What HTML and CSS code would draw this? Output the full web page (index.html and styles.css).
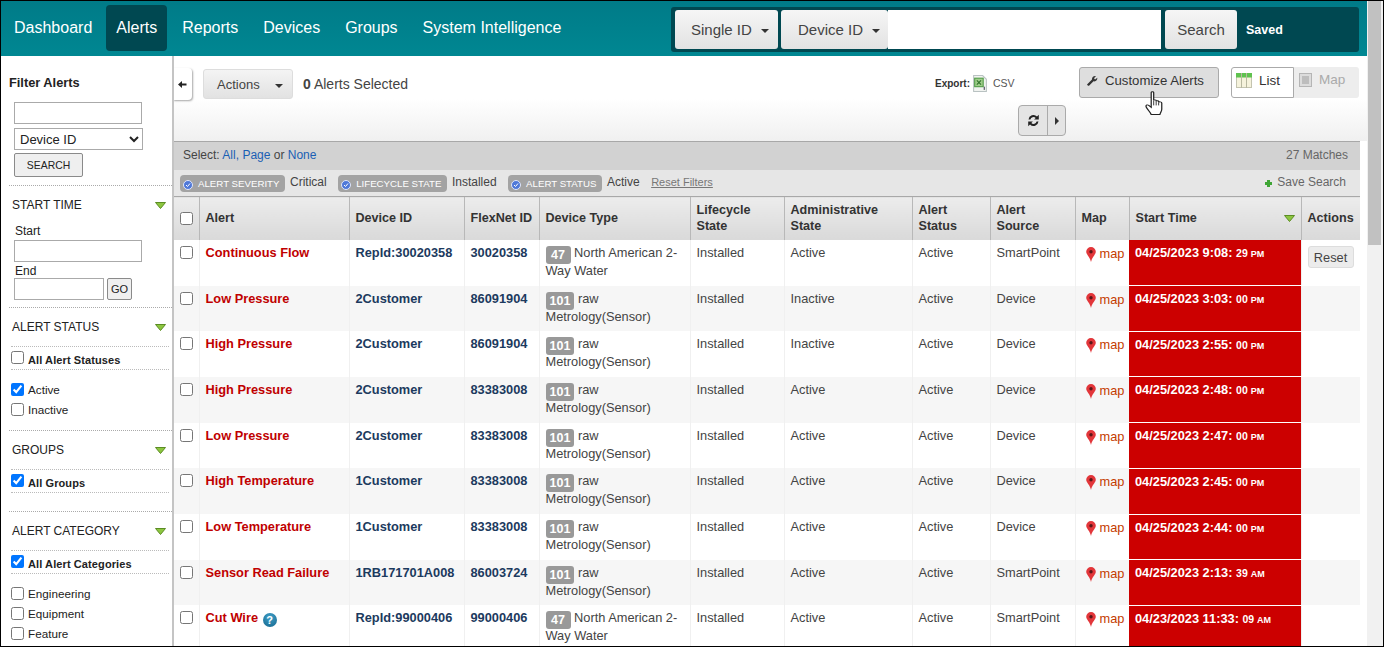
FILE: index.html
```html
<!DOCTYPE html>
<html lang="en">
<head>
<meta charset="UTF-8"/>
<title>Alerts</title>
<link rel="stylesheet" href="styles.css">
</head>
<body>
<div class="frame">
<div class="page">

<!-- top navigation -->
<div class="topbar">
  <div class="nav">
    <a class="nav-item">Dashboard</a>
    <a class="nav-item active">Alerts</a>
    <a class="nav-item">Reports</a>
    <a class="nav-item">Devices</a>
    <a class="nav-item">Groups</a>
    <a class="nav-item">System Intelligence</a>
  </div>
  <div class="searchbox">
    <div class="search-btn w-single">Single ID <span class="caret"></span></div>
    <div class="search-btn w-device">Device ID <span class="caret"></span></div>
    <div class="search-input"></div>
    <div class="search-btn w-go">Search</div>
    <div class="saved">Saved</div>
  </div>
</div>

<div class="content">

<!-- left filters -->
<div class="sidebar">
  <div class="side-title">Filter Alerts</div>
  <div class="side-search">
    <input class="txt" type="text">
    <select class="sel"><option>Device ID</option></select>
    <button class="side-btn">SEARCH</button>
  </div>

  <div class="side-head"><span>START TIME</span><svg class="tri" viewBox="0 0 11 7"><polygon points="0.5,0.5 10.5,0.5 5.5,6.5" fill="#8cc63f" stroke="#5b8c23"/></svg></div>
  <div class="dates">
    <div class="lbl">Start</div>
    <input class="txt" type="text">
    <div class="lbl">End</div>
    <div class="end-row"><input class="txt short" type="text"><button class="go">GO</button></div>
  </div>

  <div class="side-head"><span>ALERT STATUS</span><svg class="tri" viewBox="0 0 11 7"><polygon points="0.5,0.5 10.5,0.5 5.5,6.5" fill="#8cc63f" stroke="#5b8c23"/></svg></div>
  <label class="all-row"><input type="checkbox"><b>All Alert Statuses</b></label>
  <div class="opts">
    <label><input type="checkbox" checked>Active</label>
    <label><input type="checkbox">Inactive</label>
  </div>

  <div class="side-head"><span>GROUPS</span><svg class="tri" viewBox="0 0 11 7"><polygon points="0.5,0.5 10.5,0.5 5.5,6.5" fill="#8cc63f" stroke="#5b8c23"/></svg></div>
  <label class="all-row"><input type="checkbox" checked><b>All Groups</b></label>
  <div class="spacer"></div>

  <div class="side-head"><span>ALERT CATEGORY</span><svg class="tri" viewBox="0 0 11 7"><polygon points="0.5,0.5 10.5,0.5 5.5,6.5" fill="#8cc63f" stroke="#5b8c23"/></svg></div>
  <label class="all-row"><input type="checkbox" checked><b>All Alert Categories</b></label>
  <div class="opts">
    <label><input type="checkbox">Engineering</label>
    <label><input type="checkbox">Equipment</label>
    <label><input type="checkbox">Feature</label>
  </div>
</div>

<div class="main">
  <!-- toolbar -->
  <div class="toolbar">
    <div class="collapse"><svg width="9" height="7" viewBox="0 0 9 7"><path d="M0 3.500L4 0V2.500H8.500V4.500H4V7Z" fill="#222"/></svg></div>
    <div class="actions-btn">Actions <span class="caret"></span></div>
    <div class="selected"><b>0</b> Alerts Selected</div>
    <div class="tool-right">
      <div class="tool-row">
        <div class="export"><b>Export:</b>
          <svg width="16" height="17" viewBox="0 0 15 16"><path d="M1.500 .5H10L13.500 4V15.500H1.500Z" fill="#f1f3f0" stroke="#b9c2c2"/><rect x="2.500" y="3" width="8" height="8" fill="#9fce8a" stroke="#4f9a45"/><path d="M4.500 5l4 4M8.500 5l-4 4" stroke="#2f6f2a"/><rect x="11" y="11" width="1" height="3" fill="#445"/></svg>
          <span class="csv">CSV</span>
        </div>
        <div class="customize"><svg width="11" height="11" viewBox="0 0 11 11"><path d="M0 9.500L5 4.500C4.700 2.500 6.500 .5 9 1L7 3.200L8 4.500L10.300 2.800C10.700 5 8.700 7 6.500 6.300L2 10.700H1Z" fill="#333"/></svg>Customize Alerts</div>
        <div class="view-switch">
          <div class="view on"><svg width="16" height="15" viewBox="0 0 16 15"><rect x=".5" y=".5" width="15" height="14" fill="#f5f2dc" stroke="#c4c4b0"/><rect x="0" y="0" width="16" height="4.500" fill="#5fc24f"/><path d="M5.500 0V15M10.500 0V15" stroke="#b8b8a0"/></svg>List</div>
          <div class="view off"><svg width="13" height="14" viewBox="0 0 13 14"><rect x=".5" y=".5" width="12" height="13" fill="#dcdcdc" stroke="#b5b5b5"/><path d="M3 3h7v8H3z" fill="#bdbdbd"/></svg>Map</div>
        </div>
      </div>
      <div class="refresh">
        <div class="ref-l"><svg width="13" height="13" viewBox="0 0 13 13"><path d="M1.500 5.500A5 5 0 0 1 10 2.500L11.800 .8V5.500H7.100L8.700 3.900A3.200 3.200 0 0 0 3.400 5.500Z" fill="#222"/><path d="M11.500 7.500A5 5 0 0 1 3 10.500L1.200 12.200V7.500H5.900L4.300 9.100A3.200 3.200 0 0 0 9.600 7.500Z" fill="#222"/></svg></div>
        <div class="ref-r"><span class="tri-right"></span></div>
      </div>
    </div>
  </div>

  <!-- select bar -->
  <div class="selectbar">
    <div>Select: <a>All,</a> <a>Page</a> or <a>None</a></div>
    <div class="matches">27 Matches</div>
  </div>

  <!-- filter chips -->
  <div class="filterbar">
    <span class="chip"><svg class="tick" viewBox="0 0 10 10"><circle cx="5" cy="5" r="4.500" fill="#4f78d8" stroke="#dfe6fa"/><path d="M3 5l1.500 1.500L7 3.500" fill="none" stroke="#fff"/></svg>ALERT SEVERITY</span><span class="chip-val">Critical</span>
    <span class="chip"><svg class="tick" viewBox="0 0 10 10"><circle cx="5" cy="5" r="4.500" fill="#4f78d8" stroke="#dfe6fa"/><path d="M3 5l1.500 1.500L7 3.500" fill="none" stroke="#fff"/></svg>LIFECYCLE STATE</span><span class="chip-val">Installed</span>
    <span class="chip"><svg class="tick" viewBox="0 0 10 10"><circle cx="5" cy="5" r="4.500" fill="#4f78d8" stroke="#dfe6fa"/><path d="M3 5l1.500 1.500L7 3.500" fill="none" stroke="#fff"/></svg>ALERT STATUS</span><span class="chip-val">Active</span>
    <span class="reset">Reset Filters</span>
    <span class="save"><span class="plus"></span>Save Search</span>
  </div>

  <table class="alerts">
    <colgroup>
      <col class="c-chk"><col class="c-alert"><col class="c-dev"><col class="c-flex"><col class="c-type"><col class="c-life"><col class="c-admin"><col class="c-stat"><col class="c-src"><col class="c-map"><col class="c-time"><col class="c-act">
    </colgroup>
    <thead>
      <tr>
        <th><input type="checkbox"></th>
        <th>Alert</th>
        <th>Device ID</th>
        <th>FlexNet ID</th>
        <th>Device Type</th>
        <th>Lifecycle<br>State</th>
        <th>Administrative<br>State</th>
        <th>Alert<br>Status</th>
        <th>Alert<br>Source</th>
        <th>Map</th>
        <th><div class="th-sort">Start Time<svg class="tri" viewBox="0 0 11 7"><polygon points="0.5,0.5 10.5,0.5 5.500,6.500" fill="#8cc63f" stroke="#5b8c23"/></svg></div></th>
        <th>Actions</th>
      </tr>
    </thead>
    <tbody>
      <tr>
        <td><input type="checkbox"></td><td class="name">Continuous Flow</td><td class="dev">RepId:30020358</td><td class="dev">30020358</td>
        <td><span class="num">47</span> North American 2-Way Water</td><td>Installed</td><td>Active</td><td>Active</td><td>SmartPoint</td>
        <td class="map"><svg class="pin" viewBox="0 0 10 15"><path d="M5 0A4.800 4.800 0 0 0 .2 4.800C.2 7.800 3.800 9.500 5 15C6.200 9.500 9.800 7.800 9.800 4.800A4.800 4.800 0 0 0 5 0Z" fill="#e2363a"/><circle cx="5" cy="4.800" r="1.700" fill="#5a1517"/></svg>map</td>
        <td class="time">04/25/2023 9:08: <small>29 <i>PM</i></small></td><td><span class="reset-btn">Reset</span></td>
      </tr>
      <tr>
        <td><input type="checkbox"></td><td class="name">Low Pressure</td><td class="dev">2Customer</td><td class="dev">86091904</td>
        <td><span class="num">101</span> raw Metrology(Sensor)</td><td>Installed</td><td>Inactive</td><td>Active</td><td>Device</td>
        <td class="map"><svg class="pin" viewBox="0 0 10 15"><path d="M5 0A4.800 4.800 0 0 0 .2 4.800C.2 7.800 3.800 9.500 5 15C6.200 9.500 9.800 7.800 9.800 4.800A4.800 4.800 0 0 0 5 0Z" fill="#e2363a"/><circle cx="5" cy="4.800" r="1.700" fill="#5a1517"/></svg>map</td>
        <td class="time">04/25/2023 3:03: <small>00 <i>PM</i></small></td><td></td>
      </tr>
      <tr>
        <td><input type="checkbox"></td><td class="name">High Pressure</td><td class="dev">2Customer</td><td class="dev">86091904</td>
        <td><span class="num">101</span> raw Metrology(Sensor)</td><td>Installed</td><td>Inactive</td><td>Active</td><td>Device</td>
        <td class="map"><svg class="pin" viewBox="0 0 10 15"><path d="M5 0A4.800 4.800 0 0 0 .2 4.800C.2 7.800 3.800 9.500 5 15C6.200 9.500 9.800 7.800 9.800 4.800A4.800 4.800 0 0 0 5 0Z" fill="#e2363a"/><circle cx="5" cy="4.800" r="1.700" fill="#5a1517"/></svg>map</td>
        <td class="time">04/25/2023 2:55: <small>00 <i>PM</i></small></td><td></td>
      </tr>
      <tr>
        <td><input type="checkbox"></td><td class="name">High Pressure</td><td class="dev">2Customer</td><td class="dev">83383008</td>
        <td><span class="num">101</span> raw Metrology(Sensor)</td><td>Installed</td><td>Active</td><td>Active</td><td>Device</td>
        <td class="map"><svg class="pin" viewBox="0 0 10 15"><path d="M5 0A4.800 4.800 0 0 0 .2 4.800C.2 7.800 3.800 9.500 5 15C6.200 9.500 9.800 7.800 9.800 4.800A4.800 4.800 0 0 0 5 0Z" fill="#e2363a"/><circle cx="5" cy="4.800" r="1.700" fill="#5a1517"/></svg>map</td>
        <td class="time">04/25/2023 2:48: <small>00 <i>PM</i></small></td><td></td>
      </tr>
      <tr>
        <td><input type="checkbox"></td><td class="name">Low Pressure</td><td class="dev">2Customer</td><td class="dev">83383008</td>
        <td><span class="num">101</span> raw Metrology(Sensor)</td><td>Installed</td><td>Active</td><td>Active</td><td>Device</td>
        <td class="map"><svg class="pin" viewBox="0 0 10 15"><path d="M5 0A4.800 4.800 0 0 0 .2 4.800C.2 7.800 3.800 9.500 5 15C6.200 9.500 9.800 7.800 9.800 4.800A4.800 4.800 0 0 0 5 0Z" fill="#e2363a"/><circle cx="5" cy="4.800" r="1.700" fill="#5a1517"/></svg>map</td>
        <td class="time">04/25/2023 2:47: <small>00 <i>PM</i></small></td><td></td>
      </tr>
      <tr>
        <td><input type="checkbox"></td><td class="name">High Temperature</td><td class="dev">1Customer</td><td class="dev">83383008</td>
        <td><span class="num">101</span> raw Metrology(Sensor)</td><td>Installed</td><td>Active</td><td>Active</td><td>Device</td>
        <td class="map"><svg class="pin" viewBox="0 0 10 15"><path d="M5 0A4.800 4.800 0 0 0 .2 4.800C.2 7.800 3.800 9.500 5 15C6.200 9.500 9.800 7.800 9.800 4.800A4.800 4.800 0 0 0 5 0Z" fill="#e2363a"/><circle cx="5" cy="4.800" r="1.700" fill="#5a1517"/></svg>map</td>
        <td class="time">04/25/2023 2:45: <small>00 <i>PM</i></small></td><td></td>
      </tr>
      <tr>
        <td><input type="checkbox"></td><td class="name">Low Temperature</td><td class="dev">1Customer</td><td class="dev">83383008</td>
        <td><span class="num">101</span> raw Metrology(Sensor)</td><td>Installed</td><td>Active</td><td>Active</td><td>Device</td>
        <td class="map"><svg class="pin" viewBox="0 0 10 15"><path d="M5 0A4.800 4.800 0 0 0 .2 4.800C.2 7.800 3.800 9.500 5 15C6.200 9.500 9.800 7.800 9.800 4.800A4.800 4.800 0 0 0 5 0Z" fill="#e2363a"/><circle cx="5" cy="4.800" r="1.700" fill="#5a1517"/></svg>map</td>
        <td class="time">04/25/2023 2:44: <small>00 <i>PM</i></small></td><td></td>
      </tr>
      <tr>
        <td><input type="checkbox"></td><td class="name">Sensor Read Failure</td><td class="dev">1RB171701A008</td><td class="dev">86003724</td>
        <td><span class="num">101</span> raw Metrology(Sensor)</td><td>Installed</td><td>Active</td><td>Active</td><td>SmartPoint</td>
        <td class="map"><svg class="pin" viewBox="0 0 10 15"><path d="M5 0A4.800 4.800 0 0 0 .2 4.800C.2 7.800 3.800 9.500 5 15C6.200 9.500 9.800 7.800 9.800 4.800A4.800 4.800 0 0 0 5 0Z" fill="#e2363a"/><circle cx="5" cy="4.800" r="1.700" fill="#5a1517"/></svg>map</td>
        <td class="time">04/25/2023 2:13: <small>39 <i>AM</i></small></td><td></td>
      </tr>
      <tr>
        <td><input type="checkbox"></td><td class="name">Cut Wire <span class="help">?</span></td><td class="dev">RepId:99000406</td><td class="dev">99000406</td>
        <td><span class="num">47</span> North American 2-Way Water</td><td>Installed</td><td>Active</td><td>Active</td><td>SmartPoint</td>
        <td class="map"><svg class="pin" viewBox="0 0 10 15"><path d="M5 0A4.800 4.800 0 0 0 .2 4.800C.2 7.800 3.800 9.500 5 15C6.200 9.500 9.800 7.800 9.800 4.800A4.800 4.800 0 0 0 5 0Z" fill="#e2363a"/><circle cx="5" cy="4.800" r="1.700" fill="#5a1517"/></svg>map</td>
        <td class="time">04/23/2023 11:33: <small>09 <i>AM</i></small></td><td></td>
      </tr>
    </tbody>
  </table>
</div>
</div>
</div>

<div class="scrollbar"><div class="thumb"></div></div>

<!-- mouse pointer over the customize button -->
<svg class="hand" width="18" height="24" viewBox="0 0 14.500 25" preserveAspectRatio="none"><path d="M5 1.500C5 .5 7 .5 7 1.500V10C7 9 9 9 9 10V11C9 10 11 10 11 11V12C11 11 13.500 11 13.500 12.500V19C13.500 21 12.500 22 12 24.500H5C4.500 22.500 1 18 .8 16C.6 14.500 2 14 3 15L5 17Z" fill="#fff" stroke="#222" stroke-width="1"/><path d="M7 10V15M9 11V15M11 12V15" stroke="#222" stroke-width=".8"/></svg>

</div>
</body>
</html>
```

FILE: styles.css
```css
html, body{
margin: 0;
height: 100%;
overflow: hidden;
font-family: "Liberation Sans", Arial, sans-serif;
font-size: 12px;
color: #333;
}

.frame{
position: relative;
box-sizing: border-box;
height: 647px;
border: 1px solid #000;
display: flex;
overflow: hidden;
background: #fff;
}
.page{
flex: 1;
min-width: 0;
display: flex;
flex-direction: column;
}

/* top bar */
.topbar{
flex: none;
height: 55px;
box-sizing: border-box;
background: linear-gradient(#007b88, #008792);
display: flex;
justify-content: space-between;
padding: 4px 8px 0 0;
}
.nav{
display: flex;
align-items: flex-start;
padding-left: 5px;
}
.nav-item{
color: #fff;
font-size: 16px;
height: 46px;
line-height: 45px;
padding: 0 8px;
border-radius: 4px;
}
.nav-item.active{
margin: 0 7px 0 6px;
padding: 0 10px;
background: #004851;
}
.nav-item:nth-child(n+4){
margin-left: 9px;
}
.searchbox{
width: 688px;
height: 45px;
margin-top: 2px;
box-sizing: border-box;
background: #004851;
border-radius: 3px;
display: flex;
padding: 3px 0 3px 4px;
}
.search-btn{
box-sizing: border-box;
height: 39px;
line-height: 39px;
font-size: 15px;
color: #444;
background: linear-gradient(#f6f6f6, #e2e2e2);
border-radius: 3px;
white-space: nowrap;
}
.w-single{
width: 103px;
padding-left: 16px;
margin-right: 3px;
}
.w-device{
width: 107px;
padding-left: 17px;
}
.w-go{
width: 72px;
margin-left: 4px;
text-align: center;
}
.caret{
display: inline-block;
width: 0;
height: 0;
margin-left: 5px;
vertical-align: middle;
border-top: 4px solid #333;
border-left: 4px solid transparent;
border-right: 4px solid transparent;
}
.search-input{
flex: 1;
background: #fff;
height: 39px;
}
.saved{
width: 122px;
flex: none;
box-sizing: border-box;
padding-left: 9px;
color: #fff;
font-weight: bold;
font-size: 12.500px;
line-height: 41px;
}

/* layout under the bar */
.content{
flex: 1;
display: flex;
min-height: 0;
}

/* filters */
.sidebar{
flex: none;
width: 173px;
box-sizing: border-box;
border-right: 2px solid #c4c4c4;
padding: 0 0 0 8px;
color: #222;
overflow: hidden;
}
.side-title{
font-size: 12.800px;
font-weight: bold;
margin-top: 20px;
line-height: 14px;
height: 18px;
}
.txt{
display: block;
box-sizing: border-box;
width: 128px;
height: 22px;
margin: 0;
padding: 0;
border: 1px solid #aaa;
background: #fff;
}
.txt.short{
width: 90px;
}
.side-search{
padding-left: 5px;
margin-top: 8px;
}
.sel{
display: block;
box-sizing: border-box;
width: 129px;
height: 22px;
margin-top: 4px;
font-family: "Liberation Sans", Arial, sans-serif;
font-size: 13px;
color: #222;
background: #fff;
border: 1px solid #aaa;
padding: 0 0 0 1px;
}
.side-btn{
display: block;
box-sizing: border-box;
width: 69px;
height: 24px;
margin: 3px 0 8px;
padding: 0;
background: #efefef;
border: 1px solid #8a8a8a;
border-radius: 2px;
font-family: "Liberation Sans", Arial, sans-serif;
font-size: 10.400px;
color: #222;
}
.side-head{
display: flex;
justify-content: space-between;
align-items: center;
height: 39px;
border-top: 1px dotted #aaa;
padding: 0 6px 0 3px;
box-sizing: border-box;
font-size: 12px;
}
.tri{
width: 11px;
height: 7px;
flex: none;
}
.dates{
padding: 0 0 7px 5px;
}
.lbl{
height: 16px;
line-height: 15px;
padding-left: 1px;
font-size: 12px;
}
.txt + .lbl{
line-height: 18px;
}
.end-row{
display: flex;
gap: 3px;
}
.go{
box-sizing: border-box;
width: 25px;
height: 22px;
padding: 0;
background: #efefef;
border: 1px solid #8a8a8a;
border-radius: 2px;
font-family: "Liberation Sans", Arial, sans-serif;
font-size: 11px;
color: #222;
}
.all-row{
display: flex;
align-items: flex-start;
box-sizing: border-box;
height: 24px;
border-top: 1px dotted #bbb;
border-bottom: 1px dotted #bbb;
margin: 0 3px 0 2px;
font-size: 11px;
letter-spacing: .1px;
}
.all-row input{
margin: 4px 4px 0 0;
width: 13px;
height: 13px;
flex: none;
}
.all-row b{
margin-top: 7px;
}
.opts{
padding: 9px 0 11px 2px;
font-size: 11.700px;
}
.opts input{
margin: 0 4px 0 0;
width: 13px;
height: 13px;
flex: none;
}
.opts label{
display: flex;
align-items: center;
height: 20px;
}
.spacer{
height: 18px;
}

/* main column */
.main{
flex: 1;
min-width: 0;
position: relative;
overflow: hidden;
}
.toolbar{
height: 85px;
box-sizing: border-box;
background: linear-gradient(#fff 50%, #f0f0f0);
position: relative;
display: flex;
align-items: flex-start;
padding: 13px 7px 0 29px;
}
.collapse{
position: absolute;
left: -1px;
top: 12px;
width: 19px;
height: 32px;
box-sizing: border-box;
background: #fff;
border-radius: 0 4px 4px 0;
box-shadow: 1px 1px 2px rgba(0,0,0,.35);
display: flex;
align-items: center;
justify-content: center;
}
.actions-btn{
box-sizing: border-box;
width: 90px;
height: 30px;
line-height: 29px;
padding-left: 13px;
font-size: 13px;
color: #444;
background: linear-gradient(#f4f4f4, #e2e2e2);
border: 1px solid #ddd;
border-radius: 3px;
white-space: nowrap;
}
.actions-btn .caret{
margin-left: 12px;
}
.selected{
margin-left: 10px;
font-size: 14px;
line-height: 30px;
color: #444;
}
.tool-right{
margin-left: auto;
display: flex;
flex-direction: column;
align-items: flex-start;
width: 425px;
}
.tool-row{
display: flex;
align-items: flex-start;
margin-top: -2px;
}
.export{
width: 144px;
display: flex;
align-items: center;
height: 31px;
padding-top: 1px;
box-sizing: border-box;
font-size: 10px;
color: #333;
}
.export svg{
margin: 0 5px 0 2px;
}
.csv{
font-size: 10.500px;
color: #555;
}
.customize{
width: 140px;
height: 31px;
box-sizing: border-box;
line-height: 25px;
border: 1px solid #aaa;
border-radius: 3px;
background: #dedede;
font-size: 13.200px;
color: #333;
padding-left: 7px;
white-space: nowrap;
}
.customize svg{
margin-right: 7px;
vertical-align: -1px;
}
.view-switch{
display: flex;
margin-left: 12px;
}
.view{
box-sizing: border-box;
height: 31px;
line-height: 25px;
font-size: 13.500px;
}
.view.on{
width: 63px;
padding-left: 4px;
background: #fff;
border: 1px solid #aaa;
border-radius: 3px 0 0 3px;
color: #333;
}
.view.off{
width: 65px;
padding-left: 5px;
background: #ededed;
border-radius: 0 3px 3px 0;
color: #aaa;
}
.view svg{
margin-right: 7px;
vertical-align: -3px;
}
.refresh{
display: flex;
margin: 7px 0 0 83px;
height: 31px;
box-sizing: border-box;
border: 1px solid #aaa;
border-radius: 4px;
background: #e4e4e4;
}
.ref-l{
width: 28px;
display: flex;
align-items: center;
justify-content: center;
border-right: 1px solid #aaa;
}
.ref-r{
width: 17px;
display: flex;
align-items: center;
justify-content: center;
}
.tri-right{
width: 0;
height: 0;
border-left: 4px solid #333;
border-top: 4px solid transparent;
border-bottom: 4px solid transparent;
}

.selectbar{
height: 29px;
box-sizing: border-box;
margin-right: 7px;
border-top: 1px solid #a8a8a8;
background: #d2d2d2;
display: flex;
justify-content: space-between;
align-items: center;
padding: 0 12px 2px 9px;
color: #444;
}
.selectbar a{
color: #1a5fb4;
}
.matches{
color: #666;
}
.filterbar{
height: 26px;
box-sizing: border-box;
margin-right: 7px;
background: #e6e6e6;
display: flex;
align-items: center;
padding: 0 14px 0 6px;
color: #444;
}
.chip{
display: inline-flex;
align-items: center;
height: 17px;
margin-top: 1px;
padding: 0 6px 0 3px;
border-radius: 4px;
background: #a3a3a3;
color: #fff;
font-size: 9.700px;
white-space: nowrap;
}
.tick{
width: 10px;
height: 10px;
margin: 2px 5px 0 0;
flex: none;
}
.chip-val{
margin: 0 11.500px 0 4.500px;
position: relative;
top: -1px;
}
.reset{
font-size: 11px;
color: #777;
text-decoration: underline;
position: relative;
top: -1px;
}
.save{
margin-left: auto;
color: #666;
position: relative;
top: -1px;
}
.plus{
display: inline-block;
width: 7px;
height: 7px;
margin-right: 5px;
background:
 linear-gradient(#3fa535, #3fa535) center/7px 3px no-repeat,
 linear-gradient(#3fa535, #3fa535) center/3px 7px no-repeat;
vertical-align: -1px;
}

/* alerts table */
.alerts{
border-collapse: collapse;
table-layout: fixed;
width: 1186px;
}
.c-chk{ width: 25px; }
.c-alert{ width: 150px; }
.c-dev{ width: 115px; }
.c-flex{ width: 75px; }
.c-type{ width: 151px; }
.c-life{ width: 94px; }
.c-admin{ width: 128px; }
.c-stat{ width: 78px; }
.c-src{ width: 85px; }
.c-map{ width: 54px; }
.c-time{ width: 172px; }
.c-act{ width: 59px; }
.alerts th{
height: 43px;
box-sizing: border-box;
padding: 0 6px;
border-top: 1px solid #a8a8a8;
border-left: 1px solid #b8b8b8;
background: linear-gradient(#ececec, #d9d9d9);
text-align: left;
font-size: 12.600px;
line-height: 16px;
color: #333;
white-space: nowrap;
}
.alerts th:first-child{
border-left: 0;
padding-left: 6px;
}
.alerts th input, .alerts td input{
margin: 0;
width: 13px;
height: 13px;
display: block;
}
.th-sort{
display: flex;
justify-content: space-between;
align-items: center;
}
.alerts td{
height: 45.700px;
box-sizing: border-box;
padding: 4px 6px 0;
vertical-align: top;
border-left: 1px solid #f0f0f0;
font-size: 12.800px;
line-height: 18px;
color: #444;
overflow: hidden;
}
.alerts tbody tr:first-child td{
height: 46.100px;
}
.alerts td:first-child{
border-left: 0;
padding: 6px 0 0 6px;
}
.alerts tbody tr:nth-child(even) td{
background: #f6f6f6;
}
.alerts td.name{
color: #c00000;
font-weight: bold;
}
.alerts td.dev{
color: #1c3a5e;
font-weight: bold;
}
.num{
display: inline-block;
min-width: 25px;
box-sizing: border-box;
height: 18px;
margin: 2px 0 -2px;
line-height: 19px;
padding: 0 4px;
text-align: center;
border-radius: 3px;
background: #999;
color: #fff;
font-weight: bold;
font-size: 12.500px;
vertical-align: top;
}
.alerts td.map{
color: #c43c00;
padding: 5px 0 0 10px;
white-space: nowrap;
}
.pin{
width: 10px;
height: 15px;
margin-right: 4px;
vertical-align: -4px;
}
.alerts tbody tr td.time{
background: #cc0000;
color: #fff;
font-weight: bold;
border-bottom: 1px solid #fff;
border-left: 0;
white-space: nowrap;
}
.time small{
font-size: 10.500px;
}
.time i{
font-style: normal;
font-size: 9px;
}
.reset-btn{
display: inline-block;
margin-top: 2px;
width: 46px;
height: 22px;
line-height: 21px;
box-sizing: border-box;
text-align: center;
background: #ececec;
border: 1px solid #ddd;
border-radius: 3px;
color: #444;
}
.help{
display: inline-block;
width: 14px;
height: 14px;
margin-left: 1px;
line-height: 15px;
text-align: center;
border-radius: 50%;
background: radial-gradient(circle at 50% 30%, #3f9fc8, #14668c);
color: #fff;
font-size: 11px;
vertical-align: -2px;
}

.scrollbar{
flex: none;
width: 16px;
background: #f1f1f1;
}
.thumb{
height: 244px;
margin: 0 2px 0 1px;
background: #c1c1c1;
}

.hand{
position: absolute;
left: 1144px;
top: 90px;
}
```
